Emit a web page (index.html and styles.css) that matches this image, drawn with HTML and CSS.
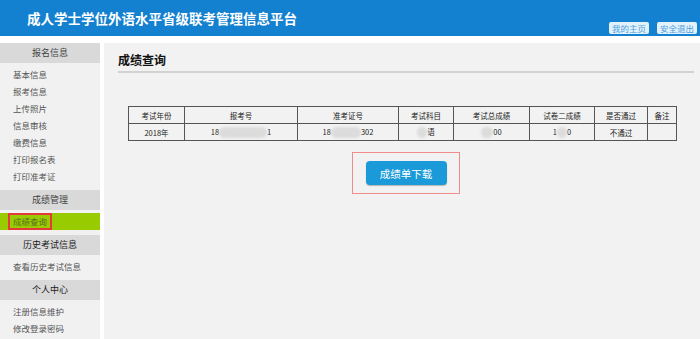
FILE: index.html
```html
<!DOCTYPE html>
<html lang="zh-CN">
<head>
  <meta charset="UTF-8">
  <title>成人学士学位外语水平省级联考管理信息平台</title>
  <link rel="stylesheet" href="styles.css">
</head>
<body>
  <div class="header">
    <div class="logo">成人学士学位外语水平省级联考管理信息平台</div>
    <div class="top-links">
      <a class="top-btn">我的主页</a>
      <a class="top-btn">安全退出</a>
    </div>
  </div>

  <div class="wrap">
    <div class="sidebar">
      <div class="menu-title">报名信息</div>
      <ul class="menu">
        <li>基本信息</li>
        <li>报考信息</li>
        <li>上传照片</li>
        <li>信息审核</li>
        <li>缴费信息</li>
        <li>打印报名表</li>
        <li>打印准考证</li>
      </ul>
      <div class="menu-title">成绩管理</div>
      <ul class="menu">
        <li class="active"><span class="mark">成绩查询</span></li>
      </ul>
      <div class="menu-title dark">历史考试信息</div>
      <ul class="menu">
        <li>查看历史考试信息</li>
      </ul>
      <div class="menu-title dark">个人中心</div>
      <ul class="menu">
        <li>注册信息维护</li>
        <li>修改登录密码</li>
      </ul>
    </div>

    <div class="main">
      <div class="page-title">成绩查询</div>
      <div class="title-line"></div>

      <table class="score-table">
        <tr>
          <th class="c1">考试年份</th>
          <th class="c2">报考号</th>
          <th class="c3">准考证号</th>
          <th class="c4">考试科目</th>
          <th class="c5">考试总成绩</th>
          <th class="c6">试卷二成绩</th>
          <th class="c7">是否通过</th>
          <th class="c8">备注</th>
        </tr>
        <tr>
          <td>2018年</td>
          <td>18<span class="blur w48"></span>1</td>
          <td>18<span class="blur w30"></span>302</td>
          <td><span class="blur w10"></span>语</td>
          <td><span class="blur w12"></span>00</td>
          <td>1<span class="blur w10"></span>0</td>
          <td>不通过</td>
          <td></td>
        </tr>
      </table>

      <div class="download-box">
        <button class="btn-download">成绩单下载</button>
      </div>
    </div>
  </div>
</body>
</html>
```

FILE: styles.css
```css
body {
  margin: 0;
  background-color: #ffffff;
  font-family: "Noto Sans CJK SC", "Liberation Sans", sans-serif;
  color: #555;
  height: 339px;
  overflow: hidden;
}
.header {
  height: 36px;
  background-color: #1380d0;
  display: flex;
  justify-content: space-between;
  align-items: flex-end;
}
.logo {
  color: #ffffff;
  font-size: 13.5px;
  font-weight: bold;
  line-height: 36px;
  padding-left: 27px;
  align-self: center;
}
.top-links {
  display: flex;
  gap: 8px;
  padding: 0 3px 2px 0;
}
.top-btn {
  display: block;
  background-color: #e3f1fd;
  color: #4a9fe0;
  font-size: 8.5px;
  line-height: 12px;
  padding: 0 3px;
  border-radius: 2px;
  white-space: nowrap;
}
.wrap {
  display: flex;
  gap: 4px;
  margin-top: 7px;
  height: 296px;
}
.sidebar {
  width: 100px;
  background-color: #f1f1f1;
}
.menu-title {
  height: 20px;
  line-height: 20px;
  background-color: #d9d9d9;
  text-align: center;
  font-size: 9px;
  color: #444;
}
.menu-title.dark {
  color: #222;
}
.menu {
  list-style: none;
  margin: 0;
  padding: 3px 0 5px;
}
.menu li {
  height: 17px;
  line-height: 17px;
  font-size: 8.5px;
  padding-left: 13px;
  color: #555;
}
.menu li.active {
  background-color: #99cc00;
  padding-left: 8px;
}
.mark {
  display: inline-block;
  border: 2px solid #e53a3a;
  line-height: 13px;
  padding: 0 3px;
  color: #5a6a20;
}
.main {
  flex: 1;
  background-color: #f2f2f2;
  padding: 10px 6px 0 14px;
}
.page-title {
  font-size: 12px;
  font-weight: bold;
  color: #111;
  line-height: 14px;
}
.title-line {
  height: 2px;
  background-color: #d2d2d2;
  margin-top: 4px;
}
.score-table {
  border-collapse: collapse;
  margin: 33px 0 0 10px;
  font-size: 7.5px;
  color: #222;
  text-align: center;
}
.score-table th,
.score-table td {
  border: 1px solid #555;
  height: 16px;
  padding: 0;
  font-weight: normal;
  white-space: nowrap;
}
.c1 { width: 55px; }
.c2 { width: 112px; }
.c3 { width: 100px; }
.c4 { width: 54px; }
.c5 { width: 75px; }
.c6 { width: 64px; }
.c7 { width: 52px; }
.c8 { width: 28px; }
.blur {
  display: inline-block;
  height: 11px;
  vertical-align: middle;
  background-color: #dcdcdc;
  border-radius: 6px;
  filter: blur(1px);
}
.w48 { width: 48px; }
.w30 { width: 30px; }
.w12 { width: 12px; }
.w10 { width: 10px; }
.download-box {
  width: 106px;
  height: 40px;
  margin: 11px 0 0 234px;
  border: 1.5px solid #f08c8c;
  display: flex;
  align-items: center;
  justify-content: center;
}
.btn-download {
  width: 81px;
  height: 24px;
  border: none;
  border-radius: 4px;
  background-color: #1a9ad8;
  color: #ffffff;
  font-family: "Noto Sans CJK SC", sans-serif;
  font-size: 10.5px;
  box-shadow: 0 1px 1px rgba(0, 0, 0, 0.25);
}
```
